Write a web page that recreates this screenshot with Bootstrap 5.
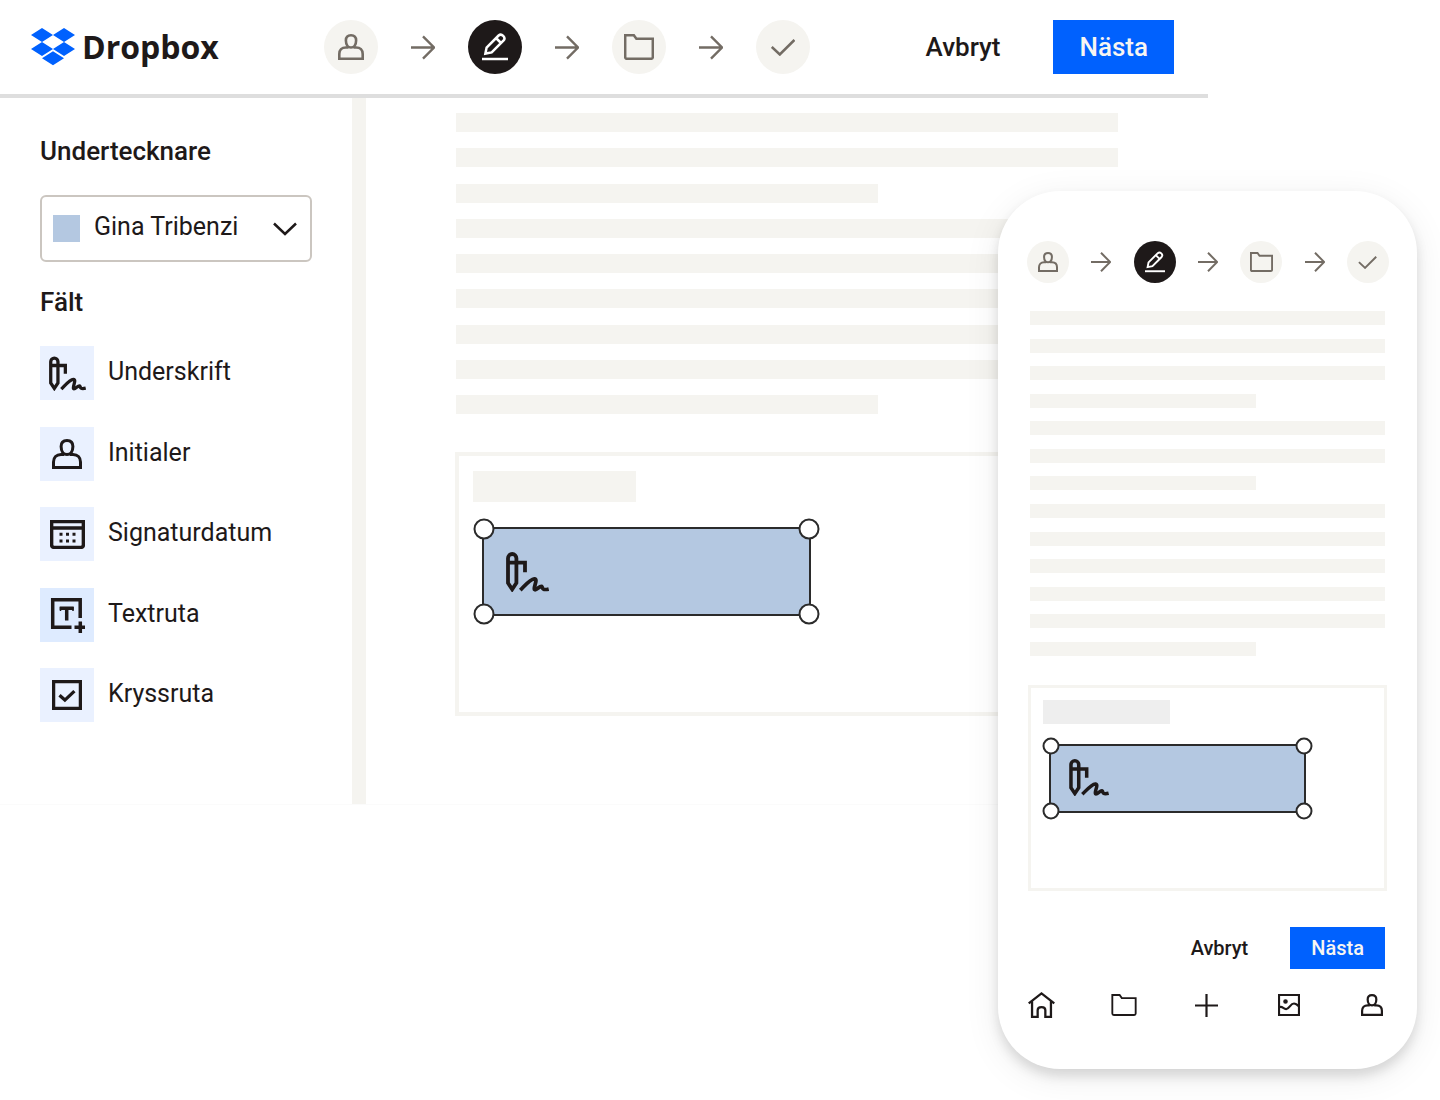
<!DOCTYPE html>
<html lang="sv">
<head>
<meta charset="utf-8">
<meta name="viewport" content="width=device-width, initial-scale=1">
<title>Dropbox – Underskrift</title>
<link href="https://cdn.jsdelivr.net/npm/bootstrap@5.3.0/dist/css/bootstrap.min.css" rel="stylesheet">
<style>
  :root { --ink: #1e1919; --stone: #736c64; --sand: #f5f4f0; --brand: #0061fe; --sky: #b4c8e1; }
  body { font-family: Roboto, "Liberation Sans", sans-serif; color: var(--ink); background: #fff; font-size: 25px; line-height: 32px; }
  svg { display: block; fill: none; stroke: currentColor; stroke-width: 3; overflow: visible; flex: none; }
  .stage { min-height: 1100px; }

  /* desktop window */
  .app-window { margin-right: 232px; border-bottom: 1px solid #fbfbfb; }
  .topbar { height: 98px; border-bottom: 4px solid #dedede; padding: 0 34px 0 31px; }
  .brand-link { width: 293px; color: var(--ink); font: 700 32px/40px "Open Sans", sans-serif; gap: 7px; }
  .brand-link svg { fill: var(--brand); stroke: none; }
  .steps { color: var(--stone); }
  .topbar .steps { gap: 33px; }
  .step-dot { width: 54px; height: 54px; background: var(--sand); color: inherit; }
  .step-dot.current { background: var(--ink); color: #fff; }
  .steps svg { stroke-width: 2.5; }
  .act { font-weight: 500; font-size: 26px; line-height: 32px; border-radius: 0; border: 0; padding: 11px 26px; color: var(--ink); }
  .act-main, .act-main:hover { background: var(--brand); color: #f7f5f2; }
  .topbar .act-group { gap: 27px; }

  .sidebar { width: 366px; border-right: 14px solid var(--sand); padding: 37px 40px 82px; }
  .side-title { font-size: 26px; line-height: 32px; font-weight: 500; margin: 0; }
  .signer { height: 67px; border: 2px solid #cbc6c0; border-radius: 6px; margin: 28px 0 24px; padding: 0 13px 0 11px; gap: 14px; }
  .swatch { width: 27px; height: 27px; background: var(--sky); flex: none; }
  .signer select { appearance: none; border: 0; background: transparent; padding: 0 0 4px; color: var(--ink); min-width: 0; line-height: 32px; }
  .signer svg { stroke-width: 2.5; pointer-events: none; }
  .field-list { height: 376px; margin-top: 28px; }
  .field-btn { border: 0; background: none; padding: 0; gap: 14px; color: var(--ink); }
  .field-ico { width: 54px; height: 54px; background: #eaf1ff; }
  .field-ico.active { background: #deebff; }
  .field-btn > span:last-child { padding-bottom: 2px; }

  .doc { padding: 15px 90px 0; }
  .skeleton i { display: block; background: var(--sand); height: 19px; }
  .skeleton i.part { width: 63.7%; }
  .doc .skeleton { height: 301px; }
  .sign-box { border: 4px solid var(--sand); }
  .doc .sign-box { height: 264px; margin: 38px -1px 0; padding: 15px 14px; }
  .tag-bar { width: 163px; height: 31px; background: var(--sand); }
  .sign-field { position: relative; background: var(--sky); border: 2px solid #2b2b2b; }
  .doc .sign-field { width: 329px; height: 89px; margin: 25px 0 0 9px; padding: 23px 22px; }
  .handle { position: absolute; width: 21px; height: 21px; border: 2px solid #2b2b2b; border-radius: 50%; background: #fff; transform: translate(-50%, -50%); }
  .h-nw { left: 0; top: 0; } .h-ne { left: 100%; top: 0; } .h-sw { left: 0; top: 100%; } .h-se { left: 100%; top: 100%; }

  /* phone laid over the window */
  .phone { position: absolute; top: 191px; right: 23px; width: 419px; background: #fff; border-radius: 62px; padding: 50px 28px 51px 29px;
           box-shadow: 0 7px 12px rgba(0,0,0,.12), 0 8px 36px rgba(0,0,0,.08); }
  .phone .step-dot { width: 42px; height: 42px; }
  .phone .skeleton { height: 345px; margin: 28px 4px 29px 3px; }
  .phone .skeleton i { height: 14px; }
  .phone .sign-box { height: 206px; border-width: 3px; padding: 12px; margin: 0 2px 0 1px; }
  .phone .tag-bar { width: 127px; height: 24px; background: #eee; }
  .phone .sign-field { width: 257px; height: 69px; margin: 20px 0 0 6px; padding: 13px 18px; }
  .phone .handle { width: 17px; height: 17px; }
  .phone .act-group { margin: 36px 4px 23px 3px; gap: 21px; }
  .phone .act { font-size: 20px; line-height: 26px; padding: 8px 21px; }
  .tabs { margin: 0 4px 0 1px; }
  .tabs a { color: var(--ink); width: 27px; display: flex; justify-content: center; }
  .tabs svg { stroke-width: 2.2; }
  #person { stroke-width: 3; }
  #sign { stroke-width: 3.8; }
</style>
</head>
<body>
<svg width="0" height="0" class="position-absolute" aria-hidden="true">
  <symbol id="person" viewBox="0 0 30 30"><g stroke-width="3"><path d="M15 1.500c-3.900 0-5.900 2.400-5.900 6 0 2.500.6 4.700 1.800 6.300.8 1.100 1.900 1.700 4.100 1.700s3.300-.6 4.100-1.700c1.200-1.600 1.800-3.800 1.800-6.300 0-3.600-2-6-5.900-6z"/><path d="M12 15.500H9c-4.600 0-7.500 3-7.500 7.500v5.500h27V23c0-4.500-2.900-7.500-7.500-7.500h-3"/></g></symbol>
  <symbol id="arrow" viewBox="0 0 25 25"><path d="M0 12.500h24M12.500 1l11.500 11.500L12.500 24"/></symbol>
  <symbol id="edit" viewBox="0 0 26 28"><path d="M3.400 20.600L4.600 14.500 16.600 2.500c3-2.600 7.600 1.900 5 5L9.700 19.400zM14 5l5 5"/><path d="M0 26h26"/></symbol>
  <symbol id="folder" viewBox="0 0 30 26"><path d="M1.200 1.200h8.600l2.600 3.600h16.400V23q0 1.800-1.800 1.800H3Q1.200 24.800 1.200 23z"/></symbol>
  <symbol id="check" viewBox="0 0 24 17"><path d="M.8 8l8 7.500L23.400 1"/></symbol>
  <symbol id="sign" viewBox="0 0 43 40"><g stroke-width="3.800"><path d="M2 6.200a4.200 4.200 0 0 1 8.400 0V31l-4.200 6.300L2 31zM2 10.700h17v9.500"/><path d="M14.300 38.200C19 33.500 24 27.200 28.300 26.900c4.200.3-1.200 8.300.2 10.600 1.700 1.700 5.300-4.200 7.200-3.100 1.500 1.300-.6 4.400 7 2.600"/></g></symbol>
  <symbol id="calendar" viewBox="0 0 35 29"><path stroke-width="3.500" d="M1.600 1.600h31.800v23.200q0 2.600-2.600 2.600H4.200q-2.600 0-2.600-2.600zM1.600 8h31.800"/><path d="M9.500 14.300h3M16 14.300h3M22.500 14.300h3M9.500 21h3M16 21h3M22.500 21h3"/></symbol>
  <symbol id="textbox" viewBox="-1 -1 35 36"><path stroke-width="3.500" d="M29.200 20V1.700H1.700v27.600H20.500M23.500 29.300H35M29.300 23.500V35.300M8.700 10.200h14M15.700 9v13.500"/><path stroke-width="1.500" d="M9.500 9v4M22 9v4"/></symbol>
  <symbol id="tick" viewBox="0 0 30 30"><path stroke-width="3.300" d="M1.600 1.600h26.800v26.800H1.600zM7.500 15.300l5.400 4.800 9.500-9"/></symbol>
  <symbol id="home" viewBox="0 0 26 25"><path d="M.7 11L13 1.400 25.300 11M3.900 9v15h5.400v-6.500q0-3 3.700-3t3.700 3V24h5.400V9"/></symbol>
  <symbol id="picture" viewBox="0 0 22 22"><path d="M1 1h20v20H1zM1 13.500c3-2.500 4.500 2 7.500 1.500s4-5.500 7.500-5.500q2 0 5 3"/><circle cx="7.500" cy="7.500" r="1.200"/></symbol>
</svg>

<div class="stage position-relative">
  <div class="app-window">
    <header class="topbar d-flex align-items-center">
      <a href="#" class="brand-link d-flex align-items-center text-decoration-none flex-shrink-0">
        <svg width="44" height="38" viewBox="0 0 44 38" aria-hidden="true"><path d="M11 0l11 7-11 7L0 7zM33 0l11 7-11 7-11-7zM11 14l11 7-11 7-11-7zM33 14l11 7-11 7-11-7zM22 23.300l11 7-11 7-11-7z"/></svg>
        <span>Dropbox</span>
      </a>
      <div class="steps d-flex align-items-center">
        <div class="step-dot rounded-circle d-flex align-items-center justify-content-center"><svg width="26" height="26"><use href="#person"/></svg></div>
        <svg width="24" height="25"><use href="#arrow"/></svg>
        <div class="step-dot current rounded-circle d-flex align-items-center justify-content-center"><svg width="26" height="28"><use href="#edit"/></svg></div>
        <svg width="24" height="25"><use href="#arrow"/></svg>
        <div class="step-dot rounded-circle d-flex align-items-center justify-content-center"><svg width="30" height="26"><use href="#folder"/></svg></div>
        <svg width="24" height="25"><use href="#arrow"/></svg>
        <div class="step-dot rounded-circle d-flex align-items-center justify-content-center"><svg width="24" height="17"><use href="#check"/></svg></div>
      </div>
      <div class="act-group d-flex ms-auto">
        <button type="button" class="btn act">Avbryt</button>
        <button type="button" class="btn act act-main">Nästa</button>
      </div>
    </header>

    <div class="d-flex">
      <aside class="sidebar flex-shrink-0">
        <label for="signer" class="side-title d-block">Undertecknare</label>
        <div class="signer d-flex align-items-center">
          <span class="swatch"></span>
          <select id="signer" class="flex-grow-1"><option>Gina Tribenzi</option></select>
          <svg width="24" height="14" viewBox="0 0 24 14"><path d="M1 1.500l11 10.500L23 1.500"/></svg>
        </div>
        <h2 class="side-title">Fält</h2>
        <div class="field-list d-flex flex-column justify-content-between align-items-start">
          <button type="button" class="field-btn d-flex align-items-center"><span class="field-ico d-flex align-items-center justify-content-center"><svg width="37" height="35"><use href="#sign"/></svg></span><span>Underskrift</span></button>
          <button type="button" class="field-btn d-flex align-items-center"><span class="field-ico d-flex align-items-center justify-content-center"><svg width="30" height="30"><use href="#person"/></svg></span><span>Initialer</span></button>
          <button type="button" class="field-btn d-flex align-items-center"><span class="field-ico d-flex align-items-center justify-content-center"><svg width="35" height="29"><use href="#calendar"/></svg></span><span>Signaturdatum</span></button>
          <button type="button" class="field-btn d-flex align-items-center"><span class="field-ico active d-flex align-items-center justify-content-center"><svg width="35" height="36"><use href="#textbox"/></svg></span><span>Textruta</span></button>
          <button type="button" class="field-btn d-flex align-items-center"><span class="field-ico d-flex align-items-center justify-content-center"><svg width="30" height="30"><use href="#tick"/></svg></span><span>Kryssruta</span></button>
        </div>
      </aside>

      <main class="doc flex-grow-1">
        <div class="skeleton d-flex flex-column justify-content-between">
          <i></i><i></i><i class="part"></i><i></i><i></i><i></i><i></i><i></i><i class="part"></i>
        </div>
        <div class="sign-box">
          <div class="tag-bar"></div>
          <div class="sign-field">
            <svg width="43" height="40"><use href="#sign"/></svg>
            <span class="handle h-nw"></span><span class="handle h-ne"></span><span class="handle h-sw"></span><span class="handle h-se"></span>
          </div>
        </div>
      </main>
    </div>
  </div>

  <section class="phone">
    <div class="steps d-flex align-items-center justify-content-between">
      <div class="step-dot rounded-circle d-flex align-items-center justify-content-center"><svg width="20" height="20"><use href="#person"/></svg></div>
      <svg width="20" height="20"><use href="#arrow"/></svg>
      <div class="step-dot current rounded-circle d-flex align-items-center justify-content-center"><svg width="20" height="22"><use href="#edit"/></svg></div>
      <svg width="20" height="20"><use href="#arrow"/></svg>
      <div class="step-dot rounded-circle d-flex align-items-center justify-content-center"><svg width="23" height="20"><use href="#folder"/></svg></div>
      <svg width="20" height="20"><use href="#arrow"/></svg>
      <div class="step-dot rounded-circle d-flex align-items-center justify-content-center"><svg width="19" height="13"><use href="#check"/></svg></div>
    </div>
    <div class="skeleton d-flex flex-column justify-content-between">
      <i></i><i></i><i></i><i class="part"></i><i></i><i></i><i class="part"></i><i></i><i></i><i></i><i></i><i></i><i class="part"></i>
    </div>
    <div class="sign-box">
      <div class="tag-bar"></div>
      <div class="sign-field">
        <svg width="40" height="37"><use href="#sign"/></svg>
        <span class="handle h-nw"></span><span class="handle h-ne"></span><span class="handle h-sw"></span><span class="handle h-se"></span>
      </div>
    </div>
    <div class="act-group d-flex justify-content-end">
      <button type="button" class="btn act">Avbryt</button>
      <button type="button" class="btn act act-main">Nästa</button>
    </div>
    <nav class="tabs d-flex align-items-center justify-content-between">
      <a href="#" aria-label="Hem"><svg width="27" height="26"><use href="#home"/></svg></a>
      <a href="#" aria-label="Filer"><svg width="26" height="22"><use href="#folder"/></svg></a>
      <a href="#" aria-label="Lägg till"><svg width="23" height="23" viewBox="0 0 23 23"><path d="M11.500 0v23M0 11.500h23"/></svg></a>
      <a href="#" aria-label="Foton"><svg width="22" height="22"><use href="#picture"/></svg></a>
      <a href="#" aria-label="Konto"><svg width="22" height="22"><use href="#person"/></svg></a>
    </nav>
  </section>
</div>
<script src="https://cdn.jsdelivr.net/npm/bootstrap@5.3.0/dist/js/bootstrap.bundle.min.js"></script>
</body>
</html>
